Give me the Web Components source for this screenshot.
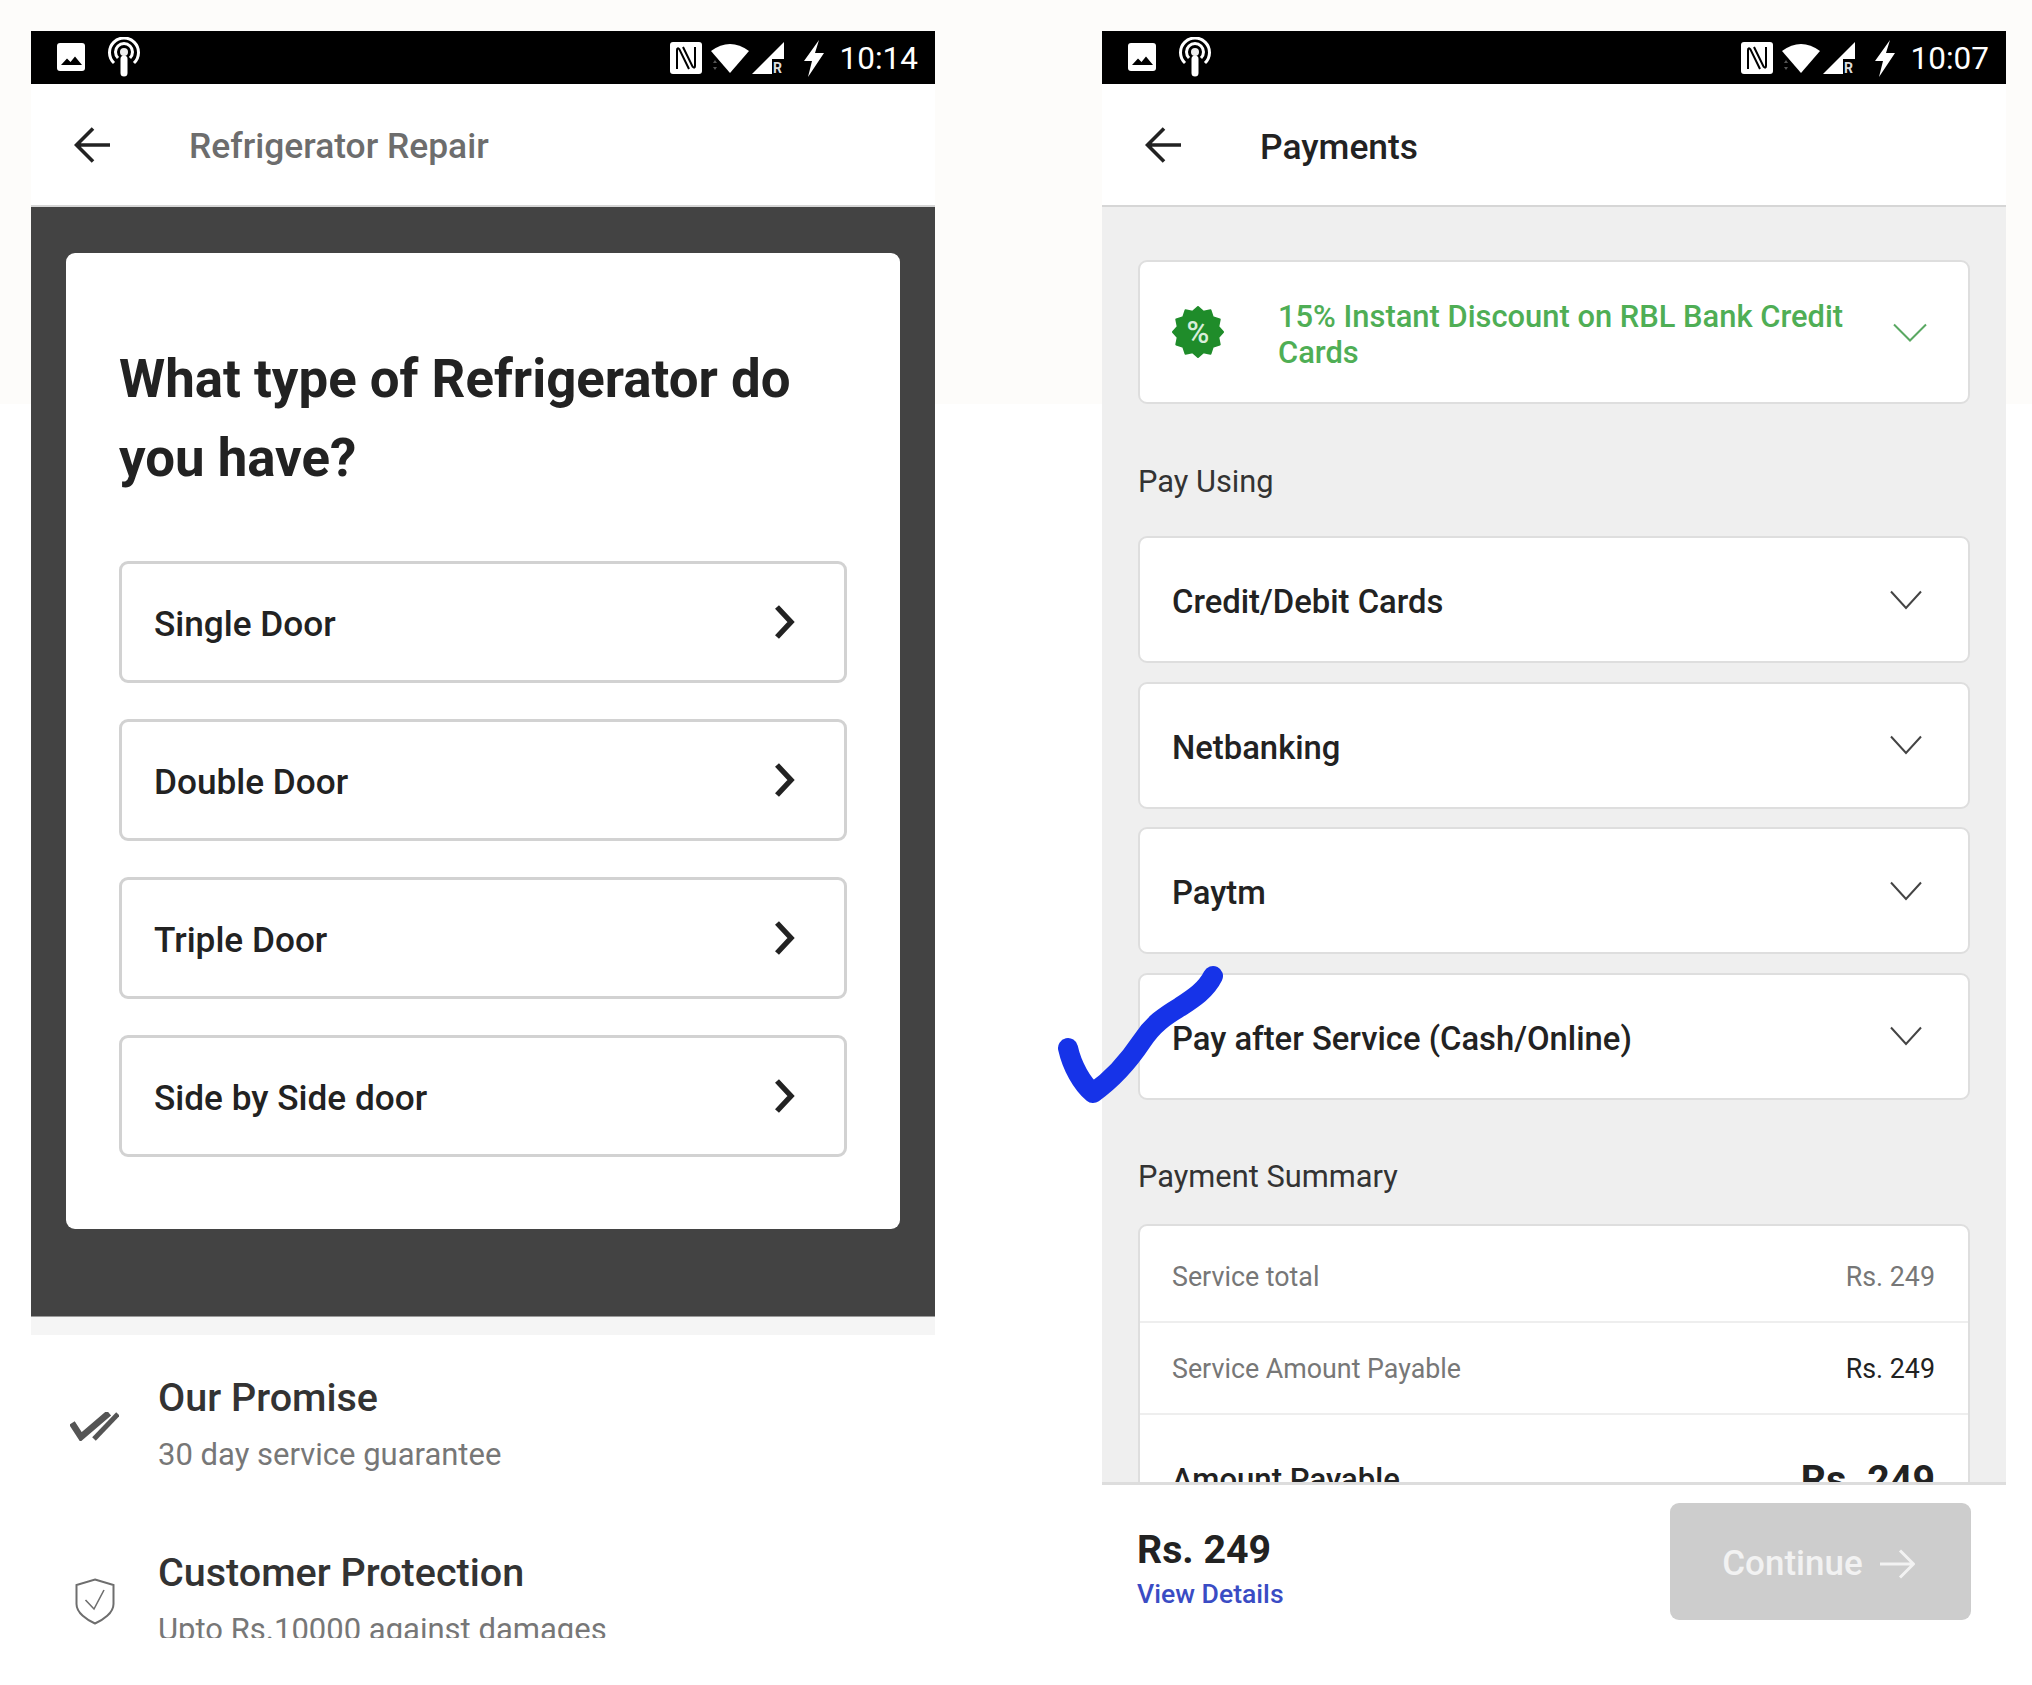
<!doctype html>
<html>
<head>
<meta charset="utf-8">
<title>Refrigerator Repair and Payments</title>
<style>
  html, body { margin: 0; padding: 0; }
  body {
    width: 2032px;
    height: 1685px;
    overflow: hidden;
    font-family: Roboto, "Liberation Sans", sans-serif;
    background: linear-gradient(#fdfcfa 404px, #fff 404px);
  }
</style>
</head>
<body>
<app-page>
  <repair-screen>
    <option-row>Single Door</option-row>
    <option-row>Double Door</option-row>
    <option-row>Triple Door</option-row>
    <option-row>Side by Side door</option-row>
  </repair-screen>
  <payment-screen>
    <pay-row>Credit/Debit Cards</pay-row>
    <pay-row>Netbanking</pay-row>
    <pay-row>Paytm</pay-row>
    <pay-row>Pay after Service (Cash/Online)</pay-row>
  </payment-screen>
</app-page>

<script>
class AppPage extends HTMLElement {
  constructor() {
    super();
    this.attachShadow({ mode: "open" });
    this.shadowRoot.innerHTML = `
      <style>
        :host { display: flex; position: relative; gap: 167px; padding: 31px 26px 0 31px; height: 1654px; }
        .tick { position: absolute; left: 1040px; top: 950px; }
      </style>
      <slot></slot>
      <svg class="tick" width="200" height="170" viewBox="1040 950 200 170" fill="none">
        <path d="M1068 1048C1072 1066 1082 1084 1093 1093C1110 1081 1128 1062 1142 1041C1153 1024 1165 1016 1180 1007C1194 998 1206 990 1213 976" stroke="#1633e8" stroke-width="20" stroke-linecap="round" stroke-linejoin="round"/>
      </svg>
    `;
  }
}

class StatusBar extends HTMLElement {
  constructor() {
    super();
    this.attachShadow({ mode: "open" });
  }

  connectedCallback() {
    this.shadowRoot.innerHTML = `
      <style>
        :host { display: flex; align-items: center; height: 53px; background: #000; color: #fff; padding: 0 17px 0 26px; }
        svg { display: block; flex: none; }
        .time { font-size: 31.5px; line-height: 53px; margin-left: 15px; position: relative; top: 1px; }
        .spacer { flex: 1; }
      </style>
      <svg width="28" height="28" viewBox="0 0 28 28" style="margin-top:-2px">
        <rect width="28" height="28" rx="3" fill="#fff"/>
        <path d="M4 22L10 15.5L13.5 19L18 13.5L25 22Z" fill="#000"/>
      </svg>
      <svg width="34" height="40" viewBox="0 0 34 40" style="margin-left:22px;margin-top:-2px" fill="none">
        <path d="M7 26A14.5 14.5 0 1 1 27 26" stroke="#fff" stroke-width="3"/>
        <path d="M11 21A8.5 8.5 0 1 1 23 21" stroke="#fff" stroke-width="3"/>
        <circle cx="17" cy="15" r="4" fill="#eee"/>
        <path d="M17 22V36" stroke="#fff" stroke-width="7" stroke-linecap="round"/>
      </svg>
      <div class="spacer"></div>
      <svg width="32" height="32" viewBox="0 0 32 32" fill="none" style="margin-top:1px">
        <rect width="32" height="32" rx="3" fill="#fff"/>
        <path d="M7 27V8Q7 5 9.5 7.5L19 27" stroke="#000" stroke-width="2"/>
        <path d="M25 5V24Q25 27 22.5 24.5L13 5" stroke="#000" stroke-width="2"/>
      </svg>
      <svg width="38" height="31" viewBox="0 0 38 31" style="margin-left:9px;margin-top:1px">
        <path d="M0 8Q19 -6 38 8L19 30Z" fill="#fff"/>
        <path d="M2 20L4 17L6 20ZM2 24L4 27L6 24Z" fill="#555"/>
      </svg>
      <svg width="33" height="36" viewBox="0 0 33 36" style="margin-left:3px;margin-top:5px">
        <path d="M0 32L32 0V32Z" fill="#fff"/>
        <rect x="20" y="17" width="13" height="15" fill="#000"/>
        <text x="21" y="31" font-size="14" font-weight="700" fill="#ddd" font-family="Roboto, sans-serif">R</text>
      </svg>
      <svg width="22" height="37" viewBox="0 0 22 37" style="margin-left:18px;margin-top:2px">
        <path d="M16 0L1 21H9L5 37L21 13H12Z" fill="#fff"/>
      </svg>
      <span class="time">${this.getAttribute("time")}</span>
    `;
  }
}

class AppBar extends HTMLElement {
  constructor() {
    super();
    this.attachShadow({ mode: "open" });
  }

  connectedCallback() {
    const muted = this.hasAttribute("muted");
    this.shadowRoot.innerHTML = `
      <style>
        :host { display: flex; align-items: center; height: 121px; background: #fff; padding-left: 43px; border-bottom: 2px solid #d6d6d6; }
        svg { display: block; flex: none; }
        .title { margin-left: 79px; font-size: 35.4px; font-weight: 500; color: ${muted ? "#6d6d6d" : "#222"}; position: relative; top: ${muted ? 1 : 2}px; }
      </style>
      <svg width="36" height="36" viewBox="0 0 36 36" fill="none" stroke="#222" stroke-width="3.6">
        <path d="M36 18H3M19 1.5L2.5 18L19 34.5"/>
      </svg>
      <span class="title">${this.getAttribute("label")}</span>
    `;
  }
}

class OptionRow extends HTMLElement {
  constructor() {
    super();
    this.attachShadow({ mode: "open" });
    this.shadowRoot.innerHTML = `
      <style>
        :host { display: flex; align-items: center; box-sizing: border-box; height: 122px; background: #fff; border: 3px solid #d2d2d2; border-radius: 9px; padding: 0 48px 0 32px; font-size: 35.2px; font-weight: 500; color: #222; }
        .label { flex: 1; position: relative; top: 2px; }
        svg { display: block; }
      </style>
      <span class="label"><slot></slot></span>
      <svg width="22" height="34" viewBox="0 0 22 34" fill="none" stroke="#222" stroke-width="5.4">
        <path d="M3 2L17 17L3 32"/>
      </svg>
    `;
  }
}

class PromiseRow extends HTMLElement {
  constructor() {
    super();
    this.attachShadow({ mode: "open" });
  }

  connectedCallback() {
    const icon = this.getAttribute("icon") === "shield"
      ? `<svg width="40" height="47" viewBox="0 0 40 47" fill="none" stroke="#6e6e6e" stroke-width="2">
           <path d="M20 1.5L38.5 7V26C38.5 35 28 42 20 45.5C12 42 1.5 35 1.5 26V7Z"/>
           <path d="M10.5 22L19 31L29 12" stroke-width="1.6"/>
         </svg>`
      : `<svg width="49" height="29" viewBox="0 0 49 29" fill="none" stroke="#555">
           <path d="M2 11L11 25L39 1" stroke-width="6.5"/>
           <path d="M24 27L48 2" stroke-width="5"/>
         </svg>`;
    this.shadowRoot.innerHTML = `
      <style>
        :host { display: flex; align-items: center; height: 104px; padding-left: 39px; }
        .icon { display: flex; justify-content: center; width: 49px; margin: 3px 39px 0 0; flex: none; }
        .name { font-size: 39.5px; line-height: 50px; font-weight: 500; color: #333; }
        .note { font-size: 31px; line-height: 44px; margin-top: 10px; color: #777; }
      </style>
      <div class="icon">${icon}</div>
      <div>
        <div class="name">${this.getAttribute("name")}</div>
        <div class="note">${this.getAttribute("note")}</div>
      </div>
    `;
  }
}

class RepairScreen extends HTMLElement {
  constructor() {
    super();
    this.attachShadow({ mode: "open" });
    this.shadowRoot.innerHTML = `
      <style>
        :host { display: block; width: 904px; flex: none; }
        .dark { background: #434343; padding: 46px 35px 87px; border-bottom: 1px solid #999; }
        .card { background: #fff; border-radius: 9px; padding: 87px 53px 72px; }
        h1 { margin: 0 0 63px; font-size: 52.8px; line-height: 79px; font-weight: 700; color: #222; }
        .options { display: flex; flex-direction: column; gap: 36px; }
        .band { height: 18px; background: #f5f5f5; }
        .promises { height: 265px; padding: 38px 0 0; overflow: hidden; background: #fff; display: flex; flex-direction: column; gap: 71px; }
      </style>
      <status-bar time="10:14"></status-bar>
      <app-bar label="Refrigerator Repair" muted></app-bar>
      <div class="dark">
        <div class="card">
          <h1>What type of Refrigerator do you have?</h1>
          <div class="options"><slot></slot></div>
        </div>
      </div>
      <div class="band"></div>
      <div class="promises">
        <promise-row icon="check" name="Our Promise" note="30 day service guarantee"></promise-row>
        <promise-row icon="shield" name="Customer Protection" note="Upto Rs.10000 against damages"></promise-row>
      </div>
    `;
  }
}

class PayRow extends HTMLElement {
  constructor() {
    super();
    this.attachShadow({ mode: "open" });
    this.shadowRoot.innerHTML = `
      <style>
        :host { display: flex; align-items: center; box-sizing: border-box; height: 127px; background: #fff; border: 2px solid #dedede; border-radius: 9px; padding: 0 46px 0 32px; font-size: 32.8px; font-weight: 500; color: #222; }
        .label { flex: 1; position: relative; top: 2.5px; }
        svg { display: block; }
      </style>
      <span class="label"><slot></slot></span>
      <svg width="32" height="20" viewBox="0 0 32 20" fill="none" stroke="#444" stroke-width="2">
        <path d="M1 1.5L16 18L31 1.5"/>
      </svg>
    `;
  }
}

class OfferBanner extends HTMLElement {
  constructor() {
    super();
    this.attachShadow({ mode: "open" });
  }

  connectedCallback() {
    const points = [];
    for (let i = 0; i < 24; i++) {
      const r = i % 2 ? 21 : 25;
      const a = (i * Math.PI) / 12 - Math.PI / 2;
      points.push(`${(26 + r * Math.cos(a)).toFixed(1)},${(26 + r * Math.sin(a)).toFixed(1)}`);
    }
    this.shadowRoot.innerHTML = `
      <style>
        :host { display: flex; align-items: center; box-sizing: border-box; height: 144px; background: #fff; border: 2px solid #dedede; border-radius: 9px; padding: 0 41px 0 32px; }
        svg { display: block; flex: none; }
        .text { flex: 1; margin: 0 30px 0 54px; font-size: 30.9px; line-height: 36px; font-weight: 500; color: #4fae55; position: relative; top: 3px; }
      </style>
      <svg width="52" height="52" viewBox="0 0 52 52">
        <polygon points="${points.join(" ")}" fill="#1f8c2a" stroke="#1f8c2a" stroke-width="2" stroke-linejoin="round"/>
        <text x="26" y="37" text-anchor="middle" font-size="31" font-weight="500" fill="#d8eeda" font-family="Roboto, sans-serif">%</text>
      </svg>
      <span class="text">15% Instant Discount on RBL Bank Credit Cards</span>
      <svg width="34" height="19" viewBox="0 0 34 19" fill="none" stroke="#5aa862" stroke-width="2">
        <path d="M1 1.5L17 17.5L33 1.5"/>
      </svg>
    `;
  }
}

class SummaryRow extends HTMLElement {
  constructor() {
    super();
    this.attachShadow({ mode: "open" });
  }

  connectedCallback() {
    const kind = this.getAttribute("kind");
    const labelCss = kind === "total" ? "font-size:31.1px;font-weight:500;color:#222" : "font-size:26.8px;color:#777";
    const valueCss = kind === "total" ? "font-size:39.3px;font-weight:700;color:#222"
      : kind === "dark" ? "font-size:26.8px;color:#222" : "font-size:26.8px;color:#777";
    this.shadowRoot.innerHTML = `
      <style>
        :host { display: flex; align-items: center; justify-content: space-between; box-sizing: border-box; padding: 0 33px 0 32px; border-bottom: 2px solid #eee; }
        :host([kind="total"]) { border-bottom: 0; }
      </style>
      <span style="${labelCss}">${this.getAttribute("label")}</span>
      <span style="${valueCss}">${this.getAttribute("value")}</span>
    `;
  }
}

class PaymentScreen extends HTMLElement {
  constructor() {
    super();
    this.attachShadow({ mode: "open" });
    this.shadowRoot.innerHTML = `
      <style>
        :host { display: block; width: 904px; flex: none; }
        .scroll { box-sizing: border-box; height: 1278px; overflow: hidden; background: #efefef; padding: 53px 36px 0; border-bottom: 3px solid #ddd; }
        h2 { margin: 0; font-size: 30.8px; line-height: 40px; font-weight: 400; color: #333; }
        .pay-using { margin: 58px 0 34px; }
        .rows { display: flex; flex-direction: column; gap: 18.5px; }
        .summary-title { margin: 57px 0 27px; }
        .summary { background: #fff; border: 2px solid #dedede; border-radius: 9px 9px 0 0; }
        .summary summary-row:nth-child(1) { height: 97px; padding-top: 8px; }
        .summary summary-row:nth-child(2) { height: 92px; padding-top: 2px; }
        .summary summary-row:nth-child(3) { height: 130px; }
        .foot { display: flex; justify-content: space-between; align-items: flex-start; box-sizing: border-box; height: 135px; padding: 18px 35px 0 35px; }
        .amount { font-size: 39.3px; line-height: 48px; font-weight: 700; color: #222; margin-top: 23px; }
        .details { font-size: 26.6px; line-height: 36px; font-weight: 500; color: #3a4cc4; margin-top: 2px; }
        .continue { display: flex; align-items: center; justify-content: center; gap: 17px; width: 301px; height: 117px; padding: 4px 4px 0 0; box-sizing: border-box; background: #cdcdcd; border-radius: 9px; color: #f2f2f2; font-size: 35px; font-weight: 500; }
        svg { display: block; }
      </style>
      <status-bar time="10:07"></status-bar>
      <app-bar label="Payments"></app-bar>
      <div class="scroll">
        <offer-banner></offer-banner>
        <h2 class="pay-using">Pay Using</h2>
        <div class="rows"><slot></slot></div>
        <h2 class="summary-title">Payment Summary</h2>
        <div class="summary">
          <summary-row label="Service total" value="Rs. 249"></summary-row>
          <summary-row kind="dark" label="Service Amount Payable" value="Rs. 249"></summary-row>
          <summary-row kind="total" label="Amount Payable" value="Rs. 249"></summary-row>
        </div>
      </div>
      <div class="foot">
        <div>
          <div class="amount">Rs. 249</div>
          <div class="details">View Details</div>
        </div>
        <div class="continue">
          <span>Continue</span>
          <svg width="35" height="30" viewBox="0 0 35 30" fill="none" stroke="#f2f2f2" stroke-width="3">
            <path d="M0 15H33M20 1.5L33.5 15L20 28.5"/>
          </svg>
        </div>
      </div>
    `;
  }
}

customElements.define("app-page", AppPage);
customElements.define("status-bar", StatusBar);
customElements.define("app-bar", AppBar);
customElements.define("option-row", OptionRow);
customElements.define("promise-row", PromiseRow);
customElements.define("repair-screen", RepairScreen);
customElements.define("pay-row", PayRow);
customElements.define("offer-banner", OfferBanner);
customElements.define("summary-row", SummaryRow);
customElements.define("payment-screen", PaymentScreen);
</script>
</body>
</html>
